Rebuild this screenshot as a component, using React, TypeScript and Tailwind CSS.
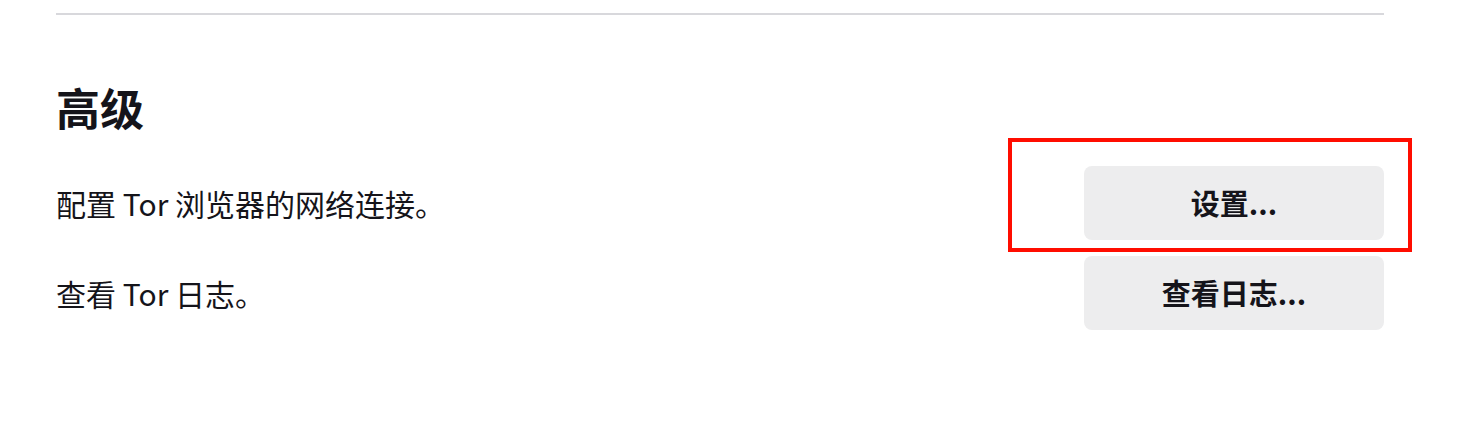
export default function App() {
  return (
    <div
      className="relative h-[438px] w-[1458px] bg-white text-[#15141a]"
      style={{ fontFamily: '"Noto Sans CJK SC", "Noto Sans", sans-serif' }}
    >
      <div className="ml-[56px] w-[1328px] pt-[13px]">
        <div className="h-[2px] bg-[#d8d8dc]" />
        <h1 className="mt-[66px] text-[44px] font-bold leading-[53px]">高级</h1>
        <div className="mt-[32px] flex flex-col gap-4">
          <div className="flex items-center justify-between">
            <span className="text-[30px] leading-[40px]">配置 Tor 浏览器的网络连接。</span>
            <button className="h-[74px] w-[300px] rounded-lg bg-[#ededee] text-[29px] font-bold">
              设置...
            </button>
          </div>
          <div className="flex items-center justify-between">
            <span className="text-[30px] leading-[40px]">查看 Tor 日志。</span>
            <button className="h-[74px] w-[300px] rounded-lg bg-[#ededee] text-[29px] font-bold">
              查看日志...
            </button>
          </div>
        </div>
      </div>
      <div className="absolute left-[1008px] top-[138px] h-[114px] w-[404px] border-4 border-[#ff0d00]" />
    </div>
  );
}
